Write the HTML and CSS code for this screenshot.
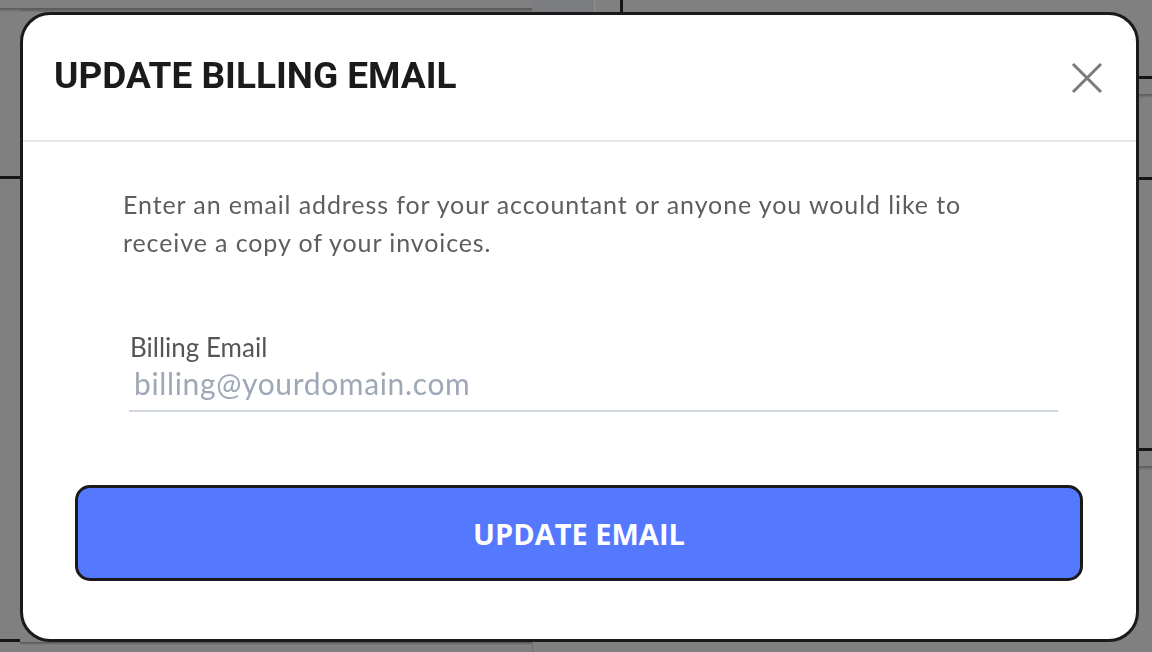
FILE: index.html
```html
<!DOCTYPE html>
<html lang="en">
<head>
<meta charset="utf-8">
<title>Update Billing Email</title>
<link rel="stylesheet" href="styles.css">
</head>
<body>
<div class="backdrop" aria-hidden="true">
  <div class="bd-left">
    <div class="seg h8"></div>
    <div class="seg-shade"></div>
    <div class="seg h164"></div>
    <div class="rule"></div>
    <div class="seg grow"></div>
    <div class="rule"></div>
    <div class="seg h10"></div>
  </div>
  <div class="bd-center">
    <div class="bd-top">
      <div class="top-card"></div>
      <div class="top-mid"></div>
      <div class="top-gap"></div>
      <div class="top-vrule"></div>
      <div class="top-rest"></div>
    </div>
    <div class="seg grow"></div>
    <div class="bd-bottom">
      <div class="bottom-card"></div>
      <div class="bottom-rest"></div>
    </div>
  </div>
  <div class="bd-right">
    <div class="seg h76"></div>
    <div class="rule"></div>
    <div class="seg h15"></div>
    <div class="seg-shade"></div>
    <div class="seg h79"></div>
    <div class="rule"></div>
    <div class="seg h268"></div>
    <div class="rule"></div>
    <div class="seg h15"></div>
    <div class="seg-shade"></div>
    <div class="seg grow"></div>
  </div>
</div>

<div class="modal" role="dialog" aria-labelledby="modal-title">
  <header class="modal-header">
    <h1 id="modal-title" class="modal-title">UPDATE BILLING EMAIL</h1>
    <button class="close-btn" type="button" aria-label="Close">
      <svg viewBox="0 0 32 32" width="32" height="32">
        <path d="M2 2 L30 30 M30 2 L2 30" stroke="#7a7a7a" stroke-width="3" stroke-linecap="butt" fill="none"/>
      </svg>
    </button>
  </header>
  <div class="modal-body">
    <p class="intro">Enter an email address for your accountant or anyone you would like to receive a copy of your invoices.</p>
    <label class="field">
      <span class="field-label">Billing Email</span>
      <input class="field-input" type="email" placeholder="billing@yourdomain.com">
    </label>
    <button class="submit-btn" type="button">UPDATE EMAIL</button>
  </div>
</div>
</body>
</html>
```

FILE: styles.css
```css
* { box-sizing: border-box; }

html, body {
  margin: 0;
  padding: 0;
  width: 1152px;
  height: 652px;
  overflow: hidden;
  background: #808080;
  font-family: "Lato", "Open Sans", sans-serif;
}

/* dimmed page behind the dialog */
.backdrop {
  display: flex;
  width: 1152px;
  height: 652px;
  background: #808080;
}
.bd-left { width: 20px; display: flex; flex-direction: column; }
.bd-center { flex: 1; display: flex; flex-direction: column; }
.bd-right { width: 13px; display: flex; flex-direction: column; }

.seg { background: #808080; }
.grow { flex: 1; }
.h8 { height: 8px; }
.h10 { height: 10px; }
.h15 { height: 15px; }
.h76 { height: 76px; }
.h79 { height: 79px; }
.h164 { height: 164px; }
.h268 { height: 268px; }
.rule { height: 3px; background: #161616; }
.seg-shade {
  height: 4px;
  background: linear-gradient(#5a5a5a, #707070 60%, #808080);
}

.bd-top { height: 12px; display: flex; }
.top-card {
  width: 512px;
  background: linear-gradient(#808080 0, #808080 8px, #585858 8px, #6a6a6a 11px, #808080 12px);
}
.top-mid { width: 63px; background: #7c7d80; border-right: 1px solid #8f8f8f; }
.top-gap { width: 25px; background: #808080; }
.top-vrule { width: 3px; background: #161616; }
.top-rest { flex: 1; background: #808080; }

.bd-bottom { height: 10px; display: flex; }
.bottom-card {
  width: 513px;
  background: linear-gradient(#555 0, #707070 2px, #808080 3px);
  border-right: 1px solid #6c6c6c;
}
.bottom-rest { flex: 1; background: #808080; }

/* dialog */
.modal {
  position: fixed;
  left: 20px;
  top: 12px;
  width: 1119px;
  height: 630px;
  background: #ffffff;
  border: 3px solid #1a1a1a;
  border-radius: 30px;
  display: flex;
  flex-direction: column;
  overflow: hidden;
}

.modal-header {
  height: 127px;
  padding: 0 33px 0 31px;
  display: flex;
  align-items: center;
  justify-content: space-between;
  border-bottom: 2px solid #e4e7eb;
}

.modal-title {
  margin: 0 0 5px;
  font-family: "Roboto", "Liberation Sans", sans-serif;
  font-weight: 700;
  font-size: 37px;
  color: #1b1b1b;
  letter-spacing: 0;
}

.close-btn {
  width: 32px;
  height: 32px;
  padding: 0;
  margin: 0;
  border: 0;
  background: transparent;
  display: flex;
  cursor: pointer;
}

.modal-body {
  flex: 1;
  padding: 43px 53px 0 52px;
  display: flex;
  flex-direction: column;
}

.intro {
  margin: 0 0 0 48px;
  font-size: 25px;
  line-height: 38px;
  color: #5e5e5e;
  letter-spacing: 0.9px;
  max-width: 880px;
}

.field {
  margin: 71px 25px 0 54px;
  display: flex;
  flex-direction: column;
}

.field-label {
  font-size: 26px;
  line-height: 30px;
  color: #555555;
  padding-left: 1px;
}

.field-input {
  margin-top: 3px;
  border: 0;
  border-bottom: 2px solid #d0d7de;
  padding: 0 0 9px 5px;
  font-family: "Lato", "Open Sans", sans-serif;
  font-size: 30px;
  line-height: 36px;
  color: #333;
  background: transparent;
  outline: none;
}
.field-input::placeholder {
  color: #9ea8b6;
  letter-spacing: 0.65px;
  opacity: 1;
}

.submit-btn {
  margin-top: 73px;
  height: 96px;
  width: 100%;
  border: 3px solid #1a1a1a;
  border-radius: 15px;
  background: #5479ff;
  color: #ffffff;
  font-family: "Open Sans", "Liberation Sans", sans-serif;
  font-weight: 700;
  font-size: 29px;
  cursor: pointer;
  padding: 0;
}
```
